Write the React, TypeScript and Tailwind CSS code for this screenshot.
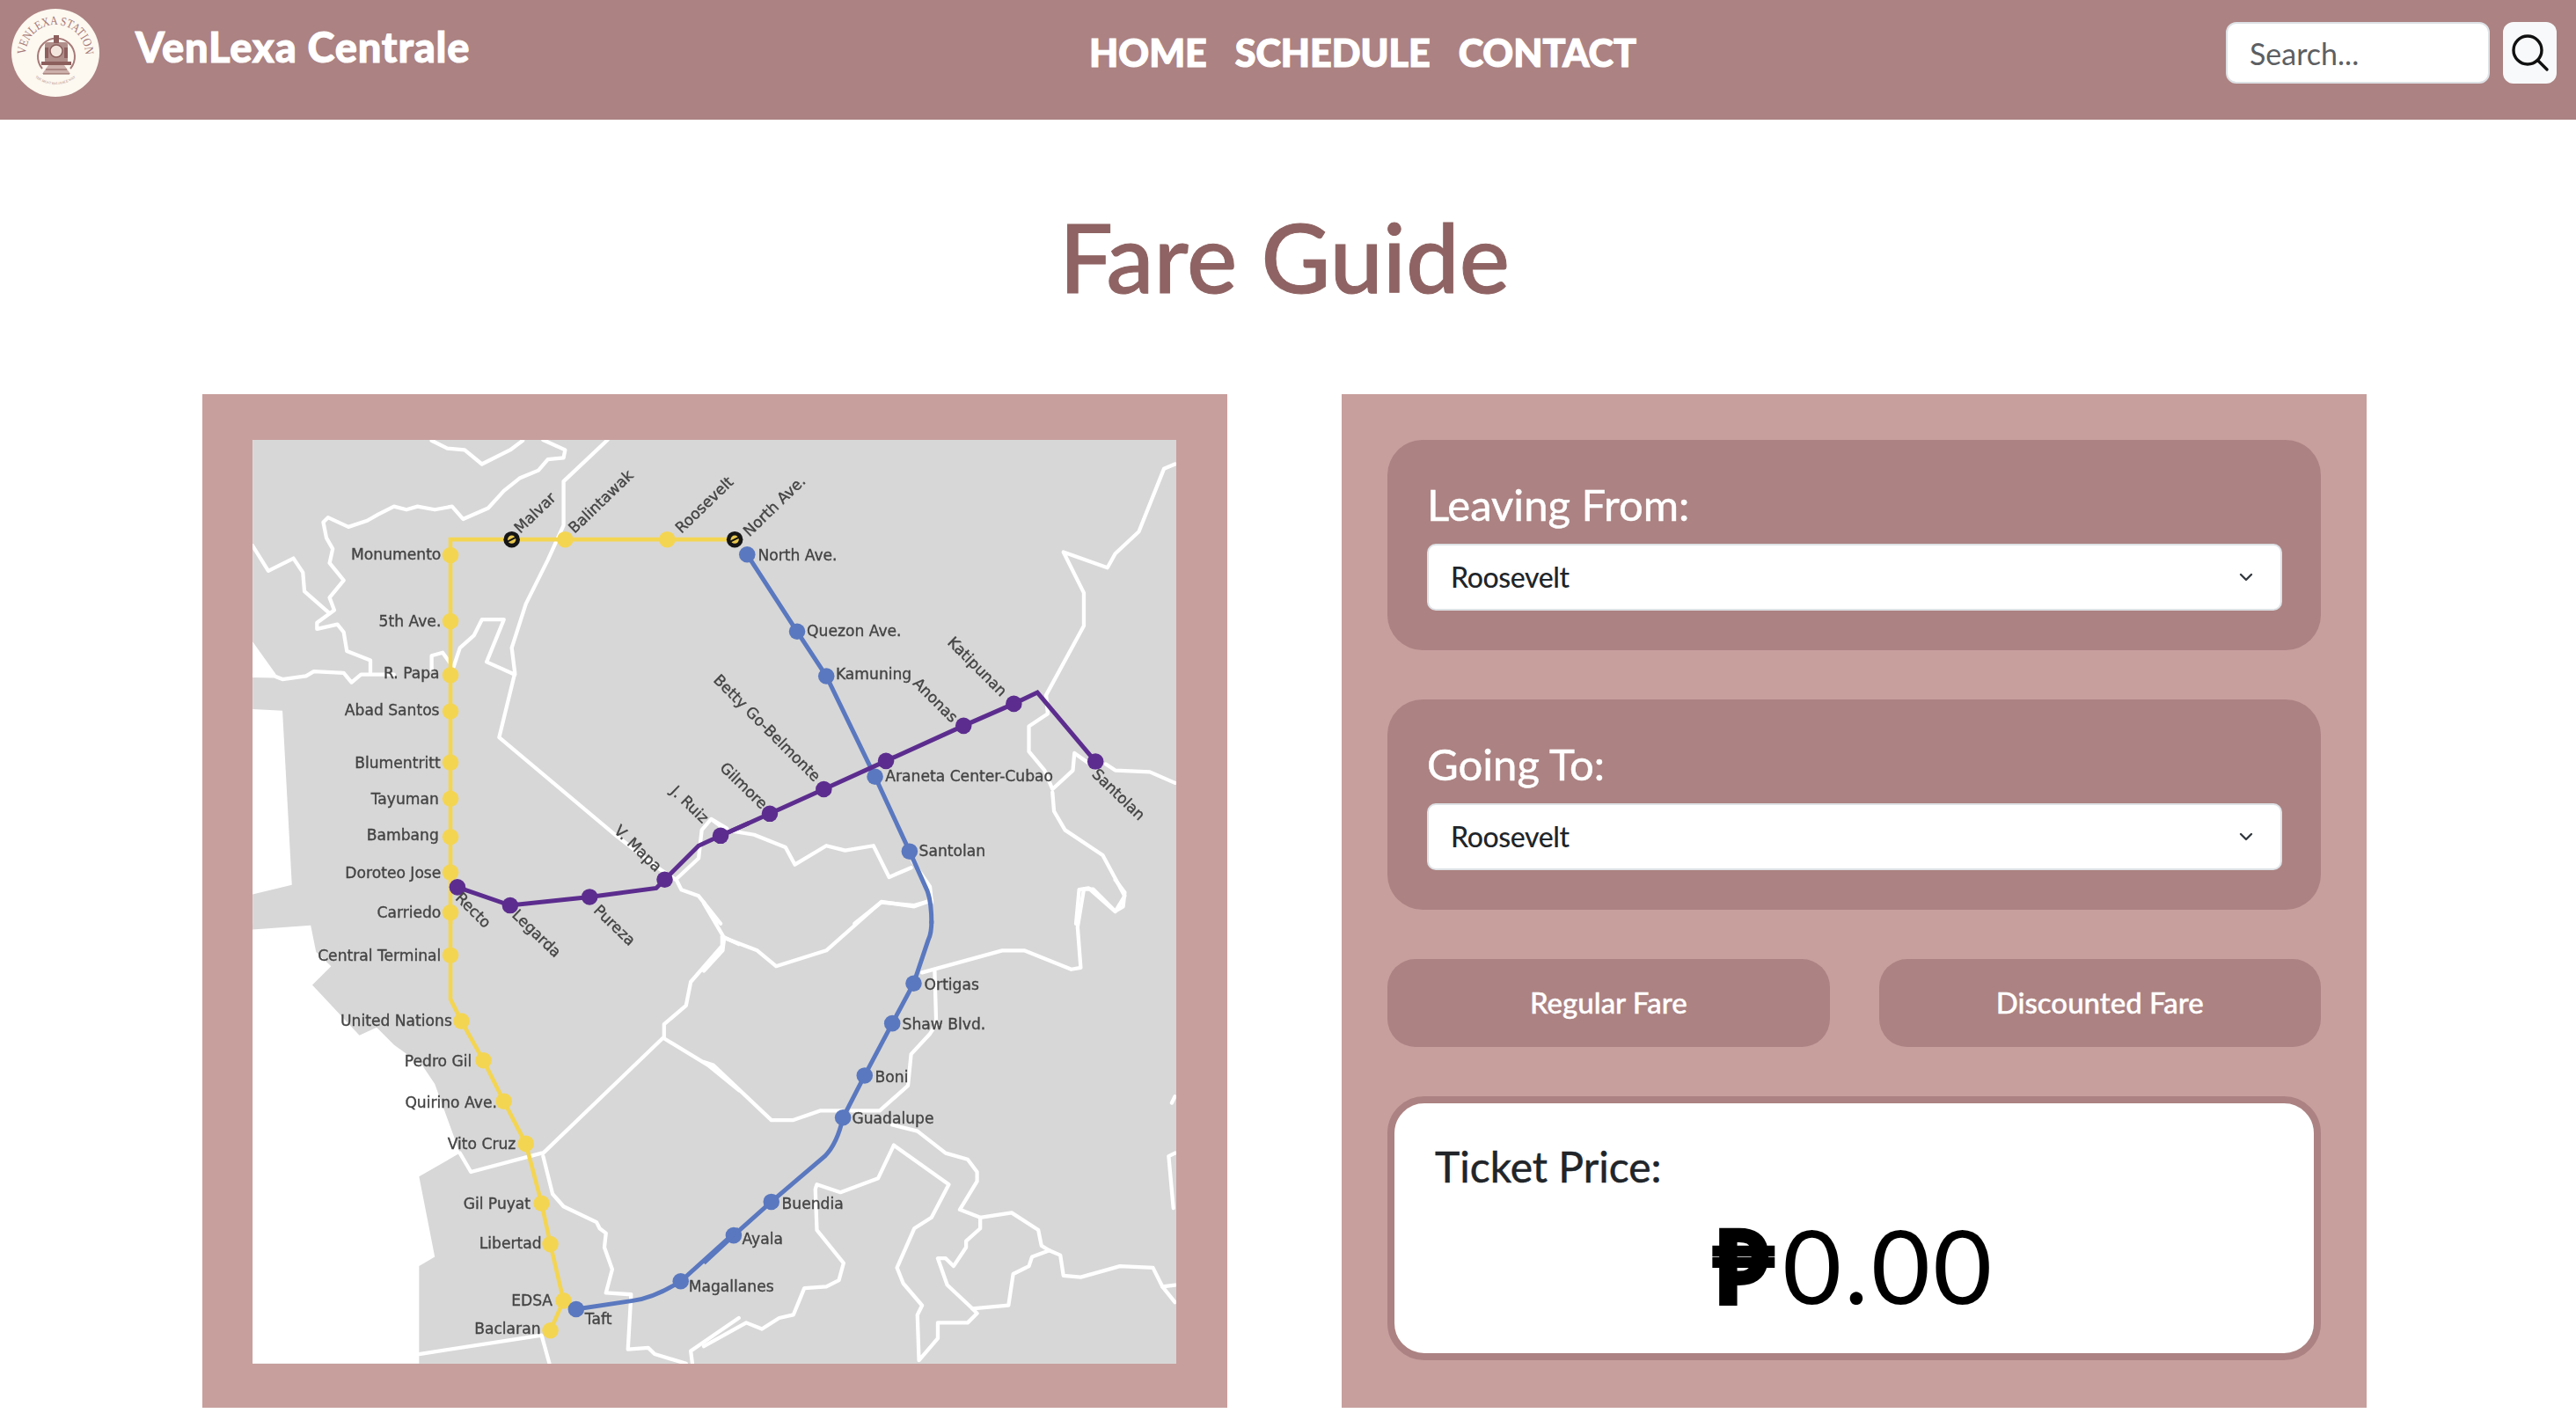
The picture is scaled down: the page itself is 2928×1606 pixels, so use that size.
import { ChevronDown } from "lucide-react";

type Label = [string, number, number, number?];

const OFFSETS = {
  a: "translate(-7 -10) scale(0.357)",
  b: "translate(513 -10) scale(0.357)",
  c: "translate(-7 500) scale(0.357)",
  d: "translate(513 500) scale(0.357)",
};

// coordinates are kept per map quadrant, in zoomed units
const seaA = ["20,670 95,775 20,780", "20,885 115,890 145,1445 20,1475", "0,0 20,0 20,1568 0,1568"];
const seaC = ["20,158 205,145 222,230 270,275 210,335 360,495 415,470 470,525 560,590 600,650 680,870 550,945 600,1200 550,1230 550,1540 20,1540"];

const roadsA = [
  "590,30 640,55 695,60 750,105 840,60 880,30",
  "945,28 1015,60 1010,85 960,90 930,125 870,150 820,190 770,245 690,280 655,240 600,250 545,240 510,250 470,240 420,265 385,285 325,305 260,275 245,290 255,340 275,375 265,420 310,475 265,530 280,570 225,610 225,630 290,615 310,640 320,700 395,730 395,770",
  "20,778 90,780 115,790 190,780 215,765 310,770 335,800 365,775 470,775",
  "20,365 70,445 150,405 180,450 185,510 265,580",
  "1150,28 1010,160 1010,300 960,410 890,550 845,690 855,770 805,975 1180,1290 1310,1390 1370,1430 1385,1460 1440,1480 1510,1568",
  "660,750 680,690 725,650 750,600 820,600 765,735 855,775",
  "590,760 590,715 625,705 650,740",
  "1370,1425 1440,1360 1450,1270 1480,1235 1530,1265",
];
const roadsB = [
  "30,1240 70,1270 160,1285 260,1325 290,1380 390,1320 450,1335 540,1320 590,1420 660,1390",
  "1500,105 1465,120 1385,320 1310,390 1285,435 1145,385 1210,515 1210,620 1090,840 1095,900 1035,940 1035,1020 1085,1080 1110,1140 1175,1080 1180,1025 1250,1075",
  "1110,1150 1115,1210 1150,1270 1270,1350 1340,1480 1310,1530 1225,1455 1195,1460 1185,1568",
  "1280,1060 1310,1080 1420,1085 1500,1120",
  "665,1370 720,1450 725,1500",
  "0,1500 40,1568",
  "480,1568 565,1500 670,1510 720,1495",
];
const roadsC = [
  "680,870 715,930 940,870",
  "945,870 1330,500 1330,460 1400,400 1415,325 1515,210 1515,180",
  "1515,180 1568,205",
  "1330,505 1470,590 1568,670",
  "945,880 975,1000 1010,1040 1115,1090 1125,1110 1145,1125 1140,1170 1165,1240 1145,1315 1225,1320 1215,1495 1280,1490 1300,1510 1400,1540",
  "1568,1395 1415,1500 1420,1540",
  "550,1510 940,1450 965,1540",
];
const roadsD = [
  "725,65 670,85 565,70 390,225 230,275 170,225 65,185 0,75",
  "65,185 60,225 0,290",
  "0,580 30,590 215,765 285,765 370,735 440,735",
  "470,735 560,735 650,655 660,555 720,490 740,460 735,290",
  "695,295 950,225 1020,225 1170,285 1200,280 1190,150 1210,30 1240,30 1310,100 1335,85 1340,40 1310,0",
  "600,780 680,800 770,870 840,890 870,930 870,960 815,1050 880,1075 980,1060 1065,1115 1075,1165 1100,1180 1135,1195 1145,1260 1200,1265 1325,1230 1430,1235 1460,1295 1500,1345",
  "1460,1295 1500,1290",
  "605,845 780,970 725,1075 670,1110 615,1235 635,1285 695,1355 680,1385 685,1530 745,1460 745,1410 840,1410 870,1380 855,1365 775,1290 745,1205 770,1205 795,1230 835,1170 835,1150 880,1110 880,1075",
  "855,1365 970,1355 985,1255 1035,1230 1045,1200 1100,1180",
  "605,845 555,950 435,995 360,970 355,985 360,1115 445,1220 430,1275 390,1295 320,1300 285,1385 240,1395 185,1430 135,1410 0,1485",
  "1500,690 1490,710",
  "1500,870 1480,880 1495,1045",
];

const endLabelsA: Label[] = [
  ["Monumento", 620, 410],
  ["5th Ave.", 620, 622],
  ["R. Papa", 615, 787],
  ["Abad Santos", 615, 905],
  ["Blumentritt", 618, 1074],
  ["Tayuman", 613, 1187],
  ["Bambang", 613, 1302],
  ["Doroteo Jose", 620, 1422],
];
const endLabelsC: Label[] = [
  ["Carriedo", 620, 121],
  ["Central Terminal", 620, 257],
  ["United Nations", 655, 465],
  ["Pedro Gil", 718, 594],
  ["Quirino Ave.", 798, 725],
  ["Vito Cruz", 858, 857],
  ["Gil Puyat", 905, 1047],
  ["Libertad", 940, 1174],
  ["EDSA", 975, 1355],
  ["Baclaran", 937, 1445],
];
const startLabels: Record<"b" | "c" | "d", Label[]> = {
  b: [
    ["North Ave.", 172, 412],
    ["Quezon Ave.", 328, 652],
    ["Kamuning", 420, 790],
    ["Araneta Center-Cubao", 578, 1115],
    ["Santolan", 685, 1354],
  ],
  c: [
    ["Magallanes", 1408, 1310],
    ["Taft", 1078, 1415],
  ],
  d: [
    ["Ortigas", 702, 350],
    ["Shaw Blvd.", 632, 477],
    ["Boni", 545, 644],
    ["Guadalupe", 472, 777],
    ["Buendia", 248, 1047],
    ["Ayala", 122, 1160],
  ],
};
const slantedA: Label[] = [
  ["Malvar", 872, 328, -44],
  ["Balintawak", 1045, 328, -44],
  ["Roosevelt", 1385, 328, -44],
  ["V. Mapa", 1168, 1275, 44],
  ["J. Ruiz", 1348, 1150, 44],
];
const slantedB: Label[] = [
  ["North Ave.", 145, 338, -44],
  ["Gilmore", 48, 1075, 44],
  ["Betty Go-Belmonte", 28, 795, 45],
  ["Anonas", 663, 805, 45],
  ["Katipunan", 773, 675, 45],
  ["Santolan", 1233, 1095, 44],
];
const slantedC: Label[] = [
  ["Recto", 663, 60, 45],
  ["Legarda", 843, 115, 44],
  ["Pureza", 1103, 100, 44],
];

function Roads({ lines }: { lines: string[] }) {
  return (
    <>
      {lines.map((points) => (
        <polyline key={points} points={points} fill="none" stroke="#fff" strokeWidth="12" strokeLinejoin="round" strokeLinecap="round" />
      ))}
    </>
  );
}

function Stops({ list, color }: { list: number[][]; color: string }) {
  return (
    <>
      {list.map(([x, y]) => (
        <circle key={`${x}-${y}`} cx={x} cy={y} r="26" fill={color} />
      ))}
    </>
  );
}

function Labels({ list, anchor = "start" }: { list: Label[]; anchor?: "start" | "end" }) {
  return (
    <>
      {list.map(([text, x, y, rotate]) => (
        <text
          key={`${text}-${x}`}
          x={x}
          y={y}
          textAnchor={anchor}
          fontSize="48"
          fill="#444"
          stroke="#444"
          strokeWidth="1"
          transform={rotate ? `rotate(${rotate} ${x} ${y})` : undefined}
        >
          {text}
        </text>
      ))}
    </>
  );
}

function Transfer({ x, y }: { x: number; y: number }) {
  return (
    <g>
      <circle cx={x} cy={y} r="26" fill="#151515" />
      <circle cx={x} cy={y} r="13" fill="#e9c84f" />
      <line x1={x - 14} y1={y + 7} x2={x + 14} y2={y - 7} stroke="#151515" strokeWidth="6" />
    </g>
  );
}

function TransitMap() {
  const yellow = "#f4d552";
  const purple = "#5c2d8e";
  const blue = "#5a78bf";
  return (
    <svg viewBox="0 0 1050 1050" className="w-[1050px] h-[1050px] bg-[#d7d7d7] blur-[0.7px] [font-family:'DejaVu_Sans',sans-serif]">
      <g transform={OFFSETS.a}>
        {seaA.map((p) => (
          <polygon key={p} points={p} fill="#fff" />
        ))}
        <Roads lines={roadsA} />
      </g>
      <g transform={OFFSETS.b}>
        <Roads lines={roadsB} />
      </g>
      <g transform={OFFSETS.c}>
        {seaC.map((p) => (
          <polygon key={p} points={p} fill="#fff" />
        ))}
        <Roads lines={roadsC} />
      </g>
      <g transform={OFFSETS.d}>
        <Roads lines={roadsD} />
      </g>

      {/* LRT 1 */}
      <g transform={OFFSETS.a}>
        <polyline points="1555,345 650,345 650,1568" fill="none" stroke={yellow} strokeWidth="13" />
        <Stops color={yellow} list={[[1015, 345], [1340, 345], [650, 395], [650, 605], [650, 777], [650, 892], [650, 1055], [650, 1170], [650, 1292], [650, 1405]]} />
        <Transfer x={845} y={345} />
        <Transfer x={1555} y={345} />
      </g>
      <g transform={OFFSETS.c}>
        <polyline points="650,100 650,380 685,450 755,575 820,705 890,840 940,1030 968,1160 1010,1340 968,1435" fill="none" stroke={yellow} strokeWidth="13" />
        <Stops color={yellow} list={[[650, 104], [650, 240], [685, 450], [755, 575], [820, 705], [890, 840], [940, 1030], [968, 1160], [1010, 1340], [968, 1435]]} />
      </g>

      {/* MRT 3 */}
      <g transform={OFFSETS.b}>
        <path d="M138 393 L297 638 L390 780 L545 1100 L655 1338 L712 1465 Q725 1500 725 1568" fill="none" stroke={blue} strokeWidth="14" />
        <Stops color={blue} list={[[138, 393], [297, 638], [390, 780], [545, 1100], [655, 1338]]} />
      </g>
      <g transform={OFFSETS.d}>
        <path d="M725 130 Q725 170 715 190 L668 330 L600 457 L512 623 L443 757 Q425 840 385 880 L215 1025 L95 1132 L0 1220" fill="none" stroke={blue} strokeWidth="14" />
        <Stops color={blue} list={[[668, 330], [600, 457], [512, 623], [443, 757], [215, 1025], [95, 1132]]} />
      </g>
      <g transform={OFFSETS.c}>
        <path d="M1568 1112 L1383 1278 Q1300 1330 1230 1340 L1050 1367" fill="none" stroke={blue} strokeWidth="14" />
        <Stops color={blue} list={[[1383, 1278], [1050, 1367]]} />
      </g>

      {/* LRT 2 */}
      <g transform={OFFSETS.a}>
        <polyline points="672,1452 840,1510 1093,1483 1305,1455 1332,1428 1440,1320 1510,1288 1600,1248" fill="none" stroke={purple} strokeWidth="14" />
        <Stops color={purple} list={[[672, 1452], [840, 1510], [1093, 1483], [1332, 1428], [1510, 1288]]} />
      </g>
      <g transform={OFFSETS.b}>
        <polyline points="55,1288 210,1218 382,1140 580,1050 827,938 987,868 1062,832 1247,1052" fill="none" stroke={purple} strokeWidth="14" />
        <Stops color={purple} list={[[210, 1218], [382, 1140], [580, 1050], [827, 938], [987, 868], [1247, 1052]]} />
      </g>

      <g transform={OFFSETS.a}>
        <Labels list={endLabelsA} anchor="end" />
        <Labels list={slantedA} />
      </g>
      <g transform={OFFSETS.b}>
        <Labels list={startLabels.b} />
        <Labels list={slantedB} />
      </g>
      <g transform={OFFSETS.c}>
        <Labels list={endLabelsC} anchor="end" />
        <Labels list={startLabels.c} />
        <Labels list={slantedC} />
      </g>
      <g transform={OFFSETS.d}>
        <Labels list={startLabels.d} />
      </g>
    </svg>
  );
}

function Logo() {
  return (
    <svg viewBox="0 0 100 100" className="w-[100px] h-[100px] shrink-0">
      <circle cx="50" cy="50" r="50" fill="#fdf8f0" />
      <defs>
        <path id="logo-top" d="M16 52 A34 34 0 0 1 84 52" />
        <path id="logo-bottom" d="M24 75 A36 36 0 0 0 76 75" />
      </defs>
      <text fontSize="14" fill="#a67a78" className="[font-family:'Liberation_Serif',serif]">
        <textPath href="#logo-top" textLength="107" lengthAdjust="spacingAndGlyphs">VENLEXA STATION</textPath>
      </text>
      <text fontSize="4" fill="#b08c86" className="[font-family:'Liberation_Serif',serif]">
        <textPath href="#logo-bottom" startOffset="50%" textAnchor="middle">THE MOST RELIABLE WAY</textPath>
      </text>
      <path d="M35 68 A21 21 0 1 1 67 68" fill="none" stroke="#a67a78" strokeWidth="2" />
      <rect x="38" y="38" width="26" height="24" rx="3" fill="#b08e8a" />
      <rect x="48" y="30" width="6" height="9" fill="#8c5f5d" />
      <circle cx="51" cy="48" r="7" fill="#f3e6dc" stroke="#8c5f5d" strokeWidth="1.5" />
      <path d="M38 44 H42 V56 H38 Z M60 44 H64 V56 H60 Z" fill="#8c5f5d" />
      <rect x="34" y="60" width="34" height="4" fill="#8c5f5d" />
      <path d="M42 64 L35 74 H67 L60 64 Z" fill="#cdb0ab" />
      <path d="M39 69 H63 M36 74 H66" stroke="#8c5f5d" strokeWidth="1.2" />
    </svg>
  );
}

function StationPicker({ label }: { label: string }) {
  return (
    <div className="bg-[#ac8282] rounded-[40px] h-[239px] pl-[45px] pr-[44px] pt-[45px]">
      <label className="block text-white text-[49px] leading-[56px] mb-[17px] [-webkit-text-stroke:0.5px_white]">{label}</label>
      <div className="relative">
        <select
          defaultValue="Roosevelt"
          className="block w-full h-[76px] appearance-none bg-white border-2 border-[#dee2e6] rounded-[10px] pl-[25px] text-[#212529] text-[32px] font-medium tracking-[-0.4px]"
        >
          <option>Roosevelt</option>
          <option>Balintawak</option>
          <option>North Ave.</option>
        </select>
        <ChevronDown className="absolute right-[29px] top-[26px] w-[24px] h-[24px] text-[#343a40] pointer-events-none" strokeWidth={2.4} />
      </div>
    </div>
  );
}

export default function App() {
  return (
    <div className="bg-white w-[2928px] h-[1606px] overflow-hidden [font-family:Lato,sans-serif]">
      <nav className="h-[136px] bg-[#ac8282] flex items-center pr-[22px] pb-[16px]">
        <div className="w-[1238px] shrink-0 flex items-center pl-[13px]">
          <Logo />
          <span className="ml-[41px] -mt-[14px] text-white text-[47px] font-black tracking-[0.8px] [-webkit-text-stroke:1px_white]">VenLexa Centrale</span>
        </div>
        <div className="flex gap-[32px] text-white text-[43px] font-black [-webkit-text-stroke:1.2px_white]">
          <a>HOME</a>
          <a>SCHEDULE</a>
          <a>CONTACT</a>
        </div>
        <form className="ml-auto flex items-center gap-[15px]">
          <input
            placeholder="Search..."
            className="w-[300px] h-[70px] rounded-[12px] bg-white border-2 border-[#dee2e6] px-[25px] text-[34px] text-[#212529] placeholder:text-[#5c5f63] outline-none"
          />
          <button type="button" className="w-[61px] h-[70px] rounded-[12px] bg-[#f8f9fa] flex items-center justify-center">
            <svg viewBox="0 0 48 48" className="w-[48px] h-[48px]" fill="none" stroke="#111" strokeWidth="3.4" strokeLinecap="round">
              <circle cx="21" cy="21" r="16" />
              <path d="M33 33 L43 43" />
            </svg>
          </button>
        </form>
      </nav>

      <main className="ml-[230px] w-[2460px]">
        <h1 className="h-[312px] flex items-center justify-center text-[#8f6363] text-[108px] font-medium pb-[2px] [-webkit-text-stroke:1px_#8f6363]">Fare Guide</h1>

        <div className="flex gap-[130px]">
          <section className="w-[1165px] h-[1152px] bg-[#c79f9d] pl-[57px] pt-[52px]">
            <TransitMap />
          </section>

          <section className="w-[1165px] h-[1152px] bg-[#c79f9d] px-[52px] pt-[52px] flex flex-col gap-[56px]">
            <StationPicker label="Leaving From:" />
            <StationPicker label="Going To:" />

            <div className="flex gap-[56px]">
              <button className="flex-1 h-[100px] rounded-[32px] bg-[#ac8282] text-white text-[33px] font-medium [-webkit-text-stroke:0.4px_white]">Regular Fare</button>
              <button className="flex-1 h-[100px] rounded-[32px] bg-[#ac8282] text-white text-[33px] font-medium [-webkit-text-stroke:0.4px_white]">Discounted Fare</button>
            </div>

            <div className="h-[300px] bg-white border-[8px] border-[#ac8282] rounded-[42px] px-[46px] pt-[40px]">
              <p className="text-[#212529] text-[48px] leading-[64px] [-webkit-text-stroke:0.5px_#212529]">Ticket Price:</p>
              <p className="mt-[18px] text-center text-black text-[116px] leading-[124px] tracking-[3px]">
                <span className="font-black mr-[8px] [-webkit-text-stroke:4px_black]">₱</span>0.00
              </p>
            </div>
          </section>
        </div>
      </main>
    </div>
  );
}
